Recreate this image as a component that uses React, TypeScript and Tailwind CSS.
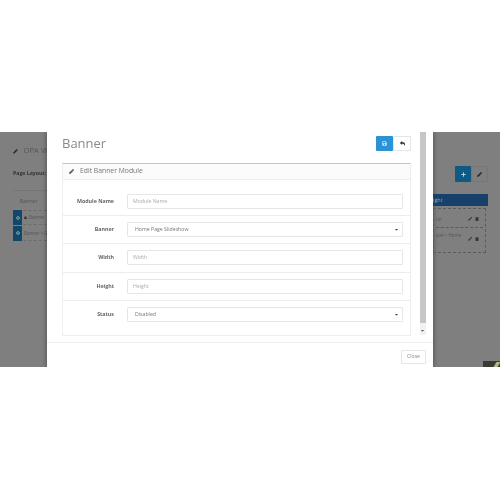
import { FaArrowsAlt, FaCaretDown, FaLock, FaPencilAlt, FaPlus, FaReply, FaSave, FaTrash } from 'react-icons/fa'

const rows = [
  { label: 'Module Name', placeholder: 'Module Name', pad: 'pt-[14px] pb-[6px] border-b border-[#ededed]' },
  { label: 'Banner', value: 'Home Page Slideshow', pad: 'pt-[6px] pb-[6px] border-b border-[#ededed]' },
  { label: 'Width', placeholder: 'Width', pad: 'pt-[6px] pb-[7px] border-b border-[#ededed]' },
  { label: 'Height', placeholder: 'Height', pad: 'pt-[6px] pb-[6px] border-b border-[#ededed]' },
  { label: 'Status', value: 'Disabled', pad: 'pt-[6px] pb-[13px]' },
]

const FormRow = ({ label, value, placeholder, pad }: { label: string; value?: string; placeholder?: string; pad: string }) => {
  return (
    <div className={`flex ${pad}`}>
      <div className="w-[51px] shrink-0 text-right text-[5.3px] font-bold leading-[15px] text-[#666]">{label}</div>
      <div className={`ml-[13px] flex h-[15px] w-[276px] items-center justify-between rounded-[1px] border border-[#e6e6e6] bg-white text-[5.2px] ${value ? 'pl-[7px] pr-[3px] text-[#777]' : 'pl-[5px] text-[#aaa]'}`}>
        <span>{value ?? placeholder}</span>
        {value && <FaCaretDown className="text-[5px] text-[#444]" />}
      </div>
    </div>
  )
}

const App = () => {
  return (
    <div className="h-[500px] w-[500px] overflow-hidden bg-white pt-[132px] font-['Open_Sans',sans-serif] blur-[0.35px]">
      <div className="relative flex h-[235px] overflow-hidden bg-[#7f7f7f]">
        {/* Page behind the dialog, left */}
        <div className="w-[47px] shrink-0 overflow-hidden whitespace-nowrap pl-[13px] pt-[14px] text-[#4c4c4c]">
          <div className="flex h-[10px] items-center gap-[6px] text-[7.5px] text-[#555]">
            <FaPencilAlt className="text-[5px] text-[#222]" />
            <span>OPA Vi</span>
          </div>
          <div className="mt-[13px] text-[5.2px] font-bold leading-[8px] text-[#333]">Page Layout:</div>
          <div className="mt-[13px] border-t border-[#757575] pl-[7px] pt-[6px] text-[5.2px] leading-[8px] text-[#555]">Banner</div>
          <div className="mt-[5px] flex h-[15px] items-center gap-[2px] border-y border-dashed border-[#6c6c6c] text-[4.5px] text-[#555]">
            <span className="flex h-[15px] w-[9px] shrink-0 items-center justify-center bg-[#12466b] text-[4px] text-[#9cb]"><FaArrowsAlt /></span>
            <FaLock className="text-[3px] text-[#333]" />
            <span>Banner</span>
          </div>
          <div className="mt-[1px] flex h-[15px] items-center gap-[2px] border-b border-dashed border-[#6c6c6c] text-[4.5px] text-[#555]">
            <span className="flex h-[15px] w-[9px] shrink-0 items-center justify-center bg-[#12466b] text-[4px] text-[#9cb]"><FaArrowsAlt /></span>
            <span>Banner &gt; G</span>
          </div>
        </div>

        {/* Dialog */}
        <div className="flex w-[386px] shrink-0 flex-col bg-white shadow-[0_0_5px_rgba(0,0,0,0.45)]">
          <div className="flex h-[211px] border-b border-[#eee]">
            <div className="w-[364px] shrink-0 pl-[15px]">
              <div className="flex h-[31px] items-start justify-between pt-[4px]">
                <h1 className="text-[13px] leading-[15px] text-[#8a8a8a]">Banner</h1>
                <div className="flex">
                  <button className="flex h-[15px] w-[17px] items-center justify-center rounded-[1px] bg-[#2a93d5] text-[5px] text-[#cfe6f5]"><FaSave /></button>
                  <button className="flex h-[15px] w-[18px] items-center justify-center border border-[#e6e6e6] bg-white text-[5px] text-[#333]"><FaReply /></button>
                </div>
              </div>
              <div className="border-x border-b border-t border-[#eee] border-t-[#c4c4c4]">
                <div className="flex h-[16px] items-center gap-[6px] border-b border-[#eee] bg-[#fbfbfb] pl-[6px] text-[6.8px] text-[#777]">
                  <FaPencilAlt className="text-[5px] text-[#444]" />
                  <span>Edit Banner Module</span>
                </div>
                {rows.map((row) => (
                  <FormRow key={row.label} {...row} />
                ))}
              </div>
            </div>
            <div className="ml-[9px] flex h-[203px] w-[6px] flex-col bg-[#f1f1f1]">
              <div className="h-[191px] bg-[#c6c6c6]" />
              <FaCaretDown className="mt-[5px] text-[5px] text-[#555]" />
            </div>
          </div>
          <div className="flex flex-1 justify-end pr-[7px] pt-[7px]">
            <button className="h-[14px] w-[25px] rounded-[1px] border border-[#e6e6e6] text-[5.2px] text-[#888]">Close</button>
          </div>
        </div>

        {/* Page behind the dialog, right */}
        <div className="flex w-[67px] shrink-0 flex-col overflow-hidden whitespace-nowrap pt-[34px] text-[#4c4c4c]">
          <div className="ml-[22px] flex">
            <div className="flex h-[16px] w-[16px] items-center justify-center rounded-[1px] bg-[#0f5a85] text-[5px] text-[#b5d0e0]"><FaPlus /></div>
            <div className="flex h-[16px] w-[17px] items-center justify-center border border-[#777] text-[5px] text-[#222]"><FaPencilAlt /></div>
          </div>
          <div className="mt-[12px] flex h-[12px] w-[55px] items-center bg-[#17406a] text-[5.5px] text-[#8aa]">
            <span>ight</span>
          </div>
          <div className="mt-[2px] w-[53px] border border-dashed border-[#5a5a5a] p-[2px]">
            <div className="flex h-[17px] items-center justify-between border-b border-dashed border-[#5a5a5a] pr-[4px] text-[4.5px] text-[#555]">
              <span>un</span>
              <span className="flex gap-[3px] text-[4px] text-[#333]"><FaPencilAlt /><FaTrash /></span>
            </div>
            <div className="mt-[1px] flex h-[21px] items-start justify-between pr-[4px] pt-[3px] text-[4.5px] text-[#555]">
              <span>ipel &gt; Home</span>
              <span className="mt-[5px] flex gap-[3px] text-[4px] text-[#333]"><FaPencilAlt /><FaTrash /></span>
            </div>
          </div>
        </div>

        {/* Corner of a widget under the overlay */}
        <div className="absolute bottom-0 right-0 h-[6px] w-[17px] overflow-hidden bg-[#3a3a34]">
          <div className="absolute right-[1px] top-[1px] h-[5px] w-[4px] skew-x-[-30deg] bg-[#b8b48a]" />
        </div>
      </div>
    </div>
  )
}

export default App
